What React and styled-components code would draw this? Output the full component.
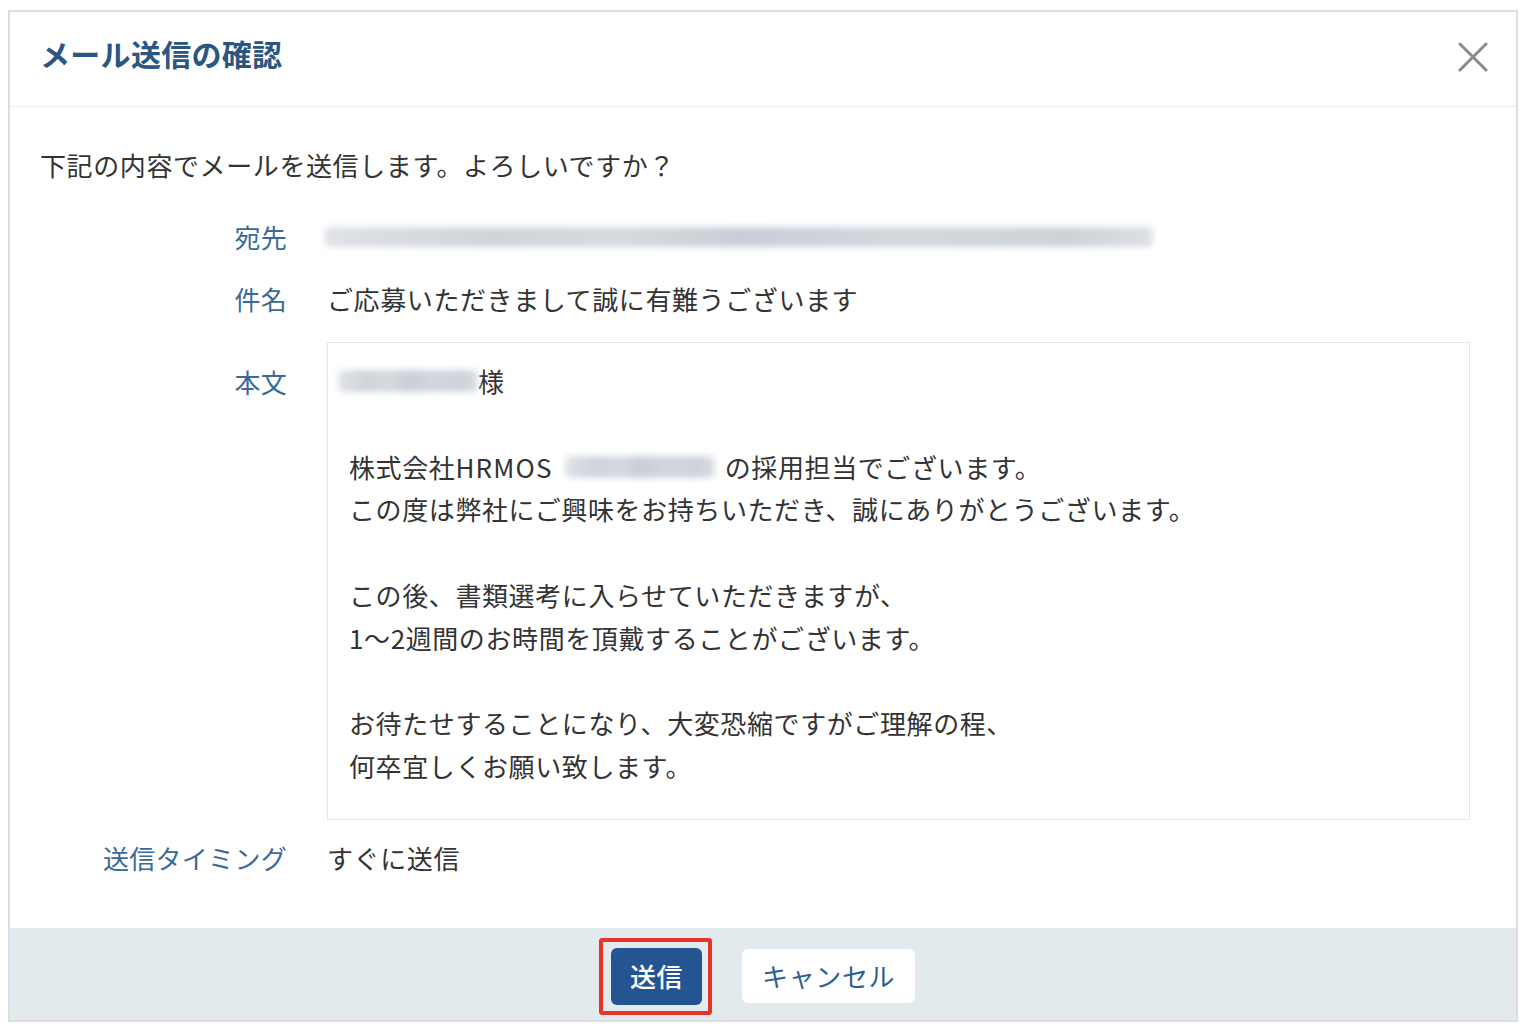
import React from 'react';
import styled, { createGlobalStyle } from 'styled-components';

const GlobalStyle = createGlobalStyle`
  html, body {
    margin: 0;
    padding: 0;
    background: #ffffff;
  }
  body {
    font-family: "Noto Sans CJK JP", "Noto Sans", sans-serif;
    color: #333333;
  }
`;

const Page = styled.div`
  padding: 10px 0 0 8px;
  width: 1532px;
  height: 1032px;
  box-sizing: border-box;
`;

const Dialog = styled.div`
  width: 1510px;
  height: 1012px;
  box-sizing: border-box;
  border: 2px solid #dedede;
  display: flex;
  flex-direction: column;
  background: #fff;
`;

const Header = styled.div`
  height: 95px;
  box-sizing: border-box;
  padding: 0 28px 12px 30px;
  border-bottom: 1px solid #ececec;
  display: flex;
  align-items: center;
  justify-content: space-between;
`;

const Title = styled.h1`
  margin: 0;
  font-size: 30px;
  font-weight: 700;
  line-height: 40px;
  color: #2b5682;
  letter-spacing: 0.3px;
`;

const CloseButton = styled.button`
  border: none;
  background: none;
  padding: 0;
  margin-top: 8px;
  width: 30px;
  height: 30px;
  display: flex;
  align-items: center;
  justify-content: center;
  cursor: pointer;
`;

const Body = styled.div`
  flex: 1;
  padding: 36px 46px 0 30px;
  font-size: 26px;
  line-height: 43px;
  letter-spacing: 0.6px;
`;

const Intro = styled.p`
  margin: 0 0 29px;
  color: #333;
`;

const Row = styled.div`
  display: grid;
  grid-template-columns: 247px 1fr;
  column-gap: 40px;
  margin-top: ${(p) => p.$gap || 0}px;
`;

const Label = styled.div`
  text-align: right;
  color: #3a6a99;
  letter-spacing: 0.3px;
  padding-top: ${(p) => p.$offset || 0}px;
`;

const Value = styled.div`
  color: #333;
  display: flex;
  align-items: center;
`;

const Blur = styled.span`
  display: inline-block;
  width: ${(p) => p.$w}px;
  height: ${(p) => p.$h || 22}px;
  margin-left: ${(p) => p.$ml || 0}px;
  margin-right: ${(p) => p.$mr || 0}px;
  vertical-align: middle;
  background: linear-gradient(
    90deg,
    #dfe2e7 0%,
    #cfd4db 20%,
    #d6dae0 35%,
    #c9ced6 50%,
    #d3d7de 70%,
    #cdd2d9 90%,
    #dde0e5 100%
  );
  filter: blur(3px);
  border-radius: 6px;
`;

const MessageBox = styled.div`
  border: 1px solid #e6e6e6;
  padding: 17px 20px 31px 21px;
  line-height: 42.8px;
  color: #333;
`;

const Line = styled.div`
  min-height: 42.8px;
  display: flex;
  align-items: center;
  white-space: pre;
`;

const Latin = styled.span`
  letter-spacing: 1.2px;
`;

const Footer = styled.div`
  height: 92px;
  background: #e3eaed;
  display: flex;
  align-items: center;
  justify-content: center;
  gap: 40px;
  padding-top: 4px;
  box-sizing: border-box;
`;

const Highlight = styled.div`
  position: relative;
  display: flex;
`;

const Frame = styled.span`
  position: absolute;
  left: -12px;
  right: -10px;
  top: -10px;
  bottom: -10px;
  border: 4px solid #e5342a;
  border-radius: 3px;
  pointer-events: none;
`;

const Button = styled.button`
  font-family: "Noto Sans CJK JP", "Noto Sans", sans-serif;
  font-size: 26px;
  line-height: 1;
  letter-spacing: 0.6px;
  border-radius: 6px;
  cursor: pointer;
  border: none;
  height: ${(p) => (p.$primary ? 57 : 54)}px;
  padding: 0 ${(p) => (p.$primary ? 19 : 20)}px;
  background: ${(p) => (p.$primary ? '#245591' : '#ffffff')};
  color: ${(p) => (p.$primary ? '#ffffff' : '#2d5f92')};
  font-weight: ${(p) => (p.$primary ? 500 : 400)};
`;

const CloseIcon = () => (
  <svg width="30" height="30" viewBox="0 0 30 30">
    <path
      d="M2 2 L28 28 M28 2 L2 28"
      stroke="#8a8a8a"
      strokeWidth="3"
      strokeLinecap="round"
    />
  </svg>
);

const App = () => (
  <Page>
    <GlobalStyle />
    <Dialog>
      <Header>
        <Title>メール送信の確認</Title>
        <CloseButton aria-label="閉じる">
          <CloseIcon />
        </CloseButton>
      </Header>
      <Body>
        <Intro>下記の内容でメールを送信します。よろしいですか？</Intro>
        <Row>
          <Label>宛先</Label>
          <Value>
            <Blur $w={828} $h={20} $ml={-2} />
          </Value>
        </Row>
        <Row $gap={19}>
          <Label>件名</Label>
          <Value>ご応募いただきまして誠に有難うございます</Value>
        </Row>
        <Row $gap={22}>
          <Label $offset={18}>本文</Label>
          <MessageBox>
            <Line>
              <Blur $w={140} $h={22} $ml={-11} />
              様
            </Line>
            <Line> </Line>
            <Line>
              株式会社<Latin>HRMOS</Latin>
              <Blur $w={150} $h={22} $ml={12} $mr={10} />
              の採用担当でございます。
            </Line>
            <Line>この度は弊社にご興味をお持ちいただき、誠にありがとうございます。</Line>
            <Line> </Line>
            <Line>この後、書類選考に入らせていただきますが、</Line>
            <Line>1〜2週間のお時間を頂戴することがございます。</Line>
            <Line> </Line>
            <Line>お待たせすることになり、大変恐縮ですがご理解の程、</Line>
            <Line>何卒宜しくお願い致します。</Line>
          </MessageBox>
        </Row>
        <Row $gap={16}>
          <Label>送信タイミング</Label>
          <Value>すぐに送信</Value>
        </Row>
      </Body>
      <Footer>
        <Highlight>
          <Button $primary>送信</Button>
          <Frame />
        </Highlight>
        <Button>キャンセル</Button>
      </Footer>
    </Dialog>
  </Page>
);

export default App;
